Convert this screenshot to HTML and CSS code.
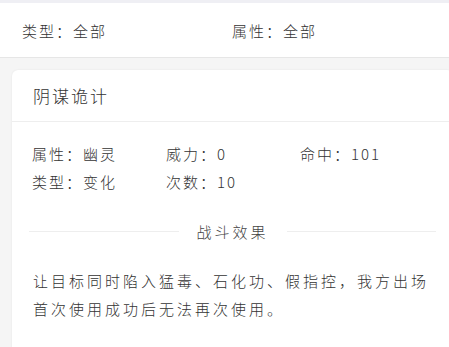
FILE: index.html
```html
<!DOCTYPE html>
<html lang="zh-CN">
<head>
  <meta charset="UTF-8" />
  <title>技能详情</title>
  <meta name="viewport" content="width=device-width, initial-scale=1.0" />
  <link rel="stylesheet" href="styles.css">
</head>
<body>

  <div class="top-strip"></div>

  <!-- Filters -->
  <div class="filter-bar">
    <div class="filter-item">类型：全部</div>
    <div class="filter-item">属性：全部</div>
  </div>

  <!-- Skill card -->
  <div class="card">
    <div class="card-title">阴谋诡计</div>

    <div class="stats">
      <span>属性：幽灵</span>
      <span>威力：0</span>
      <span>命中：101</span>
      <span>类型：变化</span>
      <span>次数：10</span>
    </div>

    <div class="effect">
      <div class="effect-head">
        <span class="line"></span>
        <span class="effect-title">战斗效果</span>
        <span class="line"></span>
      </div>
      <p class="effect-text">让目标同时陷入猛毒、石化功、假指控，我方出场首次使用成功后无法再次使用。</p>
    </div>
  </div>

</body>
</html>
```

FILE: styles.css
```css
* {
  box-sizing: border-box;
  margin: 0;
  padding: 0;
  font-family: "Noto Sans CJK SC", "Noto Sans", sans-serif;
  font-weight: 300;
}

body {
  background: #f5f5f5;
  color: #333;
  overflow: hidden;
}

.top-strip {
  height: 3px;
  background: #efeff4;
}

.filter-bar {
  height: 55px;
  background: #fff;
  border-bottom: 1px solid #e6e6e6;
  display: flex;
  align-items: center;
  padding-left: 22px;
}

.filter-item {
  width: 210px;
  font-size: 15px;
  letter-spacing: 2px;
}

.card {
  margin: 12px 0 0 12px;
  width: 441px;
  background: #fff;
  border-radius: 6px;
  box-shadow: 0 0 2px rgba(0, 0, 0, 0.08);
  padding-bottom: 30px;
}

.card-title {
  height: 52px;
  line-height: 52px;
  padding: 0 21px;
  font-size: 17px;
  letter-spacing: 2px;
  border-bottom: 1px solid #eee;
}

.stats {
  display: grid;
  grid-template-columns: repeat(3, 134px);
  padding: 18px 0 0 20px;
  font-size: 15px;
  line-height: 28px;
  letter-spacing: 2px;
}

.effect {
  padding: 0 17px;
  margin-top: 21px;
}

.effect-head {
  display: flex;
  align-items: center;
  height: 28px;
}

.effect-head .line {
  flex: 1;
  height: 1px;
  background: #eee;
}

.effect-title {
  margin: 0 18px;
  font-size: 15px;
  letter-spacing: 3px;
  color: #444;
}

.effect-text {
  margin-top: 22px;
  padding-left: 4px;
  font-size: 15px;
  line-height: 28px;
  letter-spacing: 3px;
}
```
